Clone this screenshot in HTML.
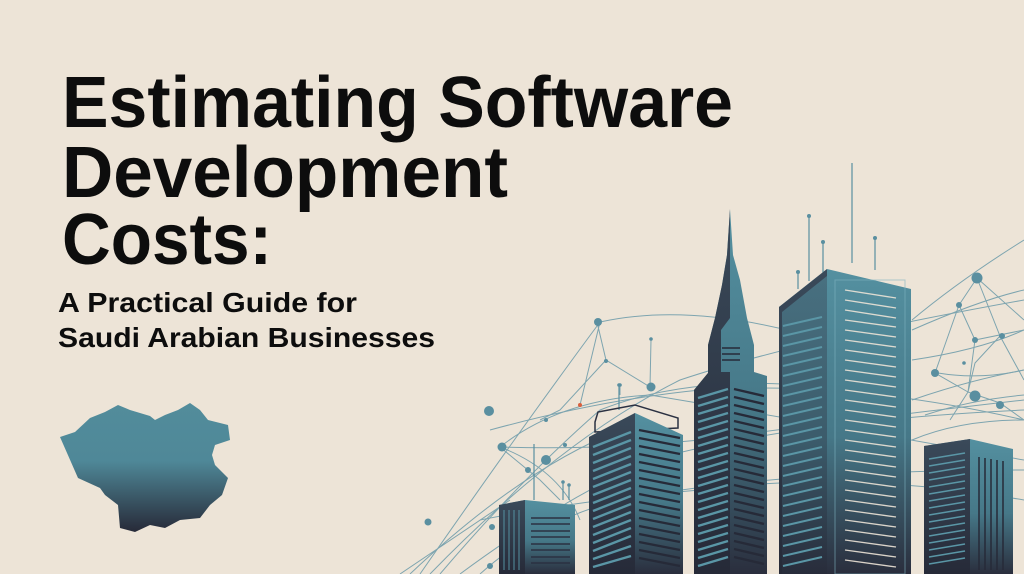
<!DOCTYPE html>
<html><head><meta charset="utf-8"><style>
html,body{margin:0;padding:0;background:#ede4d7;}
svg{display:block}
</style></head><body>
<svg width="1024" height="574" viewBox="0 0 1024 574" xmlns="http://www.w3.org/2000/svg">
<defs>
<linearGradient id="g" x1="0" y1="0" x2="0" y2="1"><stop offset="0" stop-color="#5490a0"/><stop offset="0.55" stop-color="#467888"/><stop offset="1" stop-color="#2a2e3d"/></linearGradient>
<linearGradient id="gd" x1="0" y1="0" x2="0" y2="1"><stop offset="0" stop-color="#3a4a5a"/><stop offset="1" stop-color="#262a38"/></linearGradient>
<linearGradient id="gm" x1="0" y1="0" x2="0" y2="1"><stop offset="0" stop-color="#528c9b"/><stop offset="0.45" stop-color="#4f8898"/><stop offset="1" stop-color="#272a38"/></linearGradient>
</defs>
<rect width="1024" height="574" fill="#ede4d7"/>
<g font-family="Liberation Sans, sans-serif" font-weight="bold" fill="#0d0d0d">
<text x="62" y="127" font-size="72" textLength="671" lengthAdjust="spacingAndGlyphs">Estimating Software</text>
<text x="62" y="197" font-size="72" textLength="446" lengthAdjust="spacingAndGlyphs">Development</text>
<text x="62" y="264" font-size="72" textLength="210" lengthAdjust="spacingAndGlyphs">Costs:</text>
<text x="58" y="312" font-size="28" textLength="299" lengthAdjust="spacingAndGlyphs">A Practical Guide for</text>
<text x="58" y="347" font-size="28" textLength="377" lengthAdjust="spacingAndGlyphs">Saudi Arabian Businesses</text>
</g>
<path d="M60,437 L75,432 L90,418 L105,412 L118,405 L130,410 L150,416 L155,420 L165,415 L178,410 L190,403 L200,410 L208,420 L228,425 L230,440 L215,445 L212,455 L215,465 L228,478 L222,495 L210,505 L200,518 L180,520 L165,528 L150,525 L135,532 L120,528 L118,505 L105,495 L100,488 L78,478 Z" fill="url(#gm)"/>
<g stroke="#6a9aa9" stroke-width="1" fill="none" opacity="0.85">
<path d="M420,574 Q520,430 600,322 Q700,300 840,345"/>
<path d="M430,574 Q560,440 680,380 Q800,340 1024,300"/>
<path d="M440,574 Q520,480 600,410 Q700,370 850,390"/>
<path d="M460,574 Q560,500 650,460 Q800,420 1024,410"/>
<path d="M480,574 Q540,520 620,500 Q780,470 1024,470"/>
<path d="M490,430 Q600,400 700,390 Q850,380 1024,420"/>
<path d="M500,447 Q560,400 650,395 Q800,420 1024,460"/>
<path d="M500,447 Q600,450 700,440 Q850,420 1024,400"/>
<path d="M500,447 Q560,470 580,520 M500,447 L540,480 L560,500"/>
<path d="M480,520 Q580,500 700,490 Q850,470 1024,500"/>
<path d="M600,322 L580,405 M597,322 L606,360 L650,387 M606,360 L560,410 L540,420"/>
<path d="M650,387 L651,340 M620,395 L620,385"/>
<path d="M912,320 Q960,280 1024,240 M912,330 Q980,300 1024,290 M912,360 Q980,350 1024,330 M912,400 Q970,380 1024,370 M912,440 Q960,420 1024,420"/>
<path d="M977,278 L959,305 L975,340 L968,392 L1000,403 L1024,420 M977,278 L1000,336 L1024,380 M959,305 L935,373 L968,392 M977,278 L1024,320 M975,340 L1024,330 M968,392 L975,363 L1000,336 M968,392 L950,420"/>
<path d="M938,373 Q980,380 1024,370 M925,415 Q970,400 1024,395"/>
<path d="M400,574 Q480,520 510,500 M410,574 Q520,470 620,430"/>
</g>
<g fill="#5a8fa0">
<circle cx="598" cy="322" r="4"/><circle cx="606" cy="361" r="2"/><circle cx="651" cy="387" r="4.5"/><circle cx="546" cy="420" r="2"/><circle cx="489" cy="411" r="5"/><circle cx="502" cy="447" r="4.5"/><circle cx="565" cy="445" r="2"/><circle cx="546" cy="460" r="5"/><circle cx="528" cy="470" r="3"/><circle cx="977" cy="278" r="5.5"/><circle cx="959" cy="305" r="3"/><circle cx="975" cy="340" r="3"/><circle cx="1002" cy="336" r="3"/><circle cx="935" cy="373" r="4"/><circle cx="975" cy="396" r="5.5"/><circle cx="1000" cy="405" r="4"/><circle cx="492" cy="527" r="3"/><circle cx="428" cy="522" r="3.5"/><circle cx="490" cy="566" r="3"/>
<circle cx="651" cy="339" r="1.8"/><circle cx="620" cy="385" r="1.8"/><circle cx="964" cy="363" r="1.8"/>
</g>
<circle cx="580" cy="405" r="2" fill="#d9603e"/>
<g stroke="#5a8fa0" stroke-width="1.2">
<line x1="534" y1="500" x2="534" y2="444"/><line x1="563" y1="500" x2="563" y2="482"/><line x1="569" y1="500" x2="569" y2="485"/>
<line x1="619" y1="410" x2="619" y2="385"/>
<line x1="798" y1="289" x2="798" y2="272"/><line x1="809" y1="281" x2="809" y2="216"/><line x1="823" y1="274" x2="823" y2="242"/><line x1="852" y1="263" x2="852" y2="163"/><line x1="875" y1="270" x2="875" y2="238"/>
</g>
<g fill="#5a8fa0"><circle cx="809" cy="216" r="2"/><circle cx="823" cy="242" r="2"/><circle cx="798" cy="272" r="2"/><circle cx="875" cy="238" r="2"/><circle cx="563" cy="482" r="1.8"/><circle cx="569" cy="485" r="1.8"/><circle cx="619" cy="385" r="1.8"/></g>
<!-- B1 -->
<polygon points="499,505 525,500 575,505 575,574 499,574" fill="url(#g)"/>
<polygon points="499,505 525,500 525,574 499,574" fill="url(#gd)"/>
<g stroke="#5490a0" stroke-width="1"><line x1="504" y1="510" x2="504" y2="570"/><line x1="509" y1="510" x2="509" y2="570"/><line x1="514" y1="510" x2="514" y2="570"/><line x1="519" y1="510" x2="519" y2="570"/></g>
<g stroke="#2b3142" stroke-width="1.5"><path d="M531,518H570M531,524H570M531,531H570M531,537H570M531,544H570M531,550H570M531,557H570M531,563H570"/></g>
<!-- B2 -->
<polygon points="595,422 598,412 635,405 678,418 678,428 595,432" fill="none" stroke="#2b3142" stroke-width="1.5"/>
<polygon points="589,437 635,413 683,435 683,574 589,574" fill="url(#g)"/>
<polygon points="589,437 635,413 635,574 589,574" fill="url(#gd)"/>
<g stroke="#5a96a6" stroke-width="2.4"><path d="M593,447L631,432M593,455L631,440M593,463L631,448M593,471L631,456M593,479L631,464M593,487L631,472M593,495L631,480M593,503L631,488M593,511L631,496M593,519L631,504M593,527L631,512M593,535L631,520M593,543L631,528M593,551L631,536M593,559L631,546M593,567L631,556"/></g>
<g stroke="#262a38" stroke-width="2.4"><path d="M639,430L680,438M639,438L680,446M639,446L680,454M639,454L680,462M639,462L680,470M639,470L680,478M639,478L680,486M639,486L680,494M639,494L680,502M639,502L680,510M639,510L680,518M639,518L680,526M639,526L680,534M639,534L680,542M639,542L680,550M639,550L680,558M639,558L680,566"/></g>
<!-- B3 -->
<polygon points="730,209 733,255 740,280 747,318 754,345 754,372 767,376 767,574 694,574 694,390 708,373 708,345 715,318 722,285 727,255" fill="url(#g)"/>
<polygon points="730,209 727,255 722,285 715,318 708,345 708,373 694,390 694,574 730,574 730,372 721,372 721,330 730,318" fill="url(#gd)"/>
<g stroke="#262a38" stroke-width="1.6"><path d="M722,348H740M722,354H740M722,360H740"/></g>
<g stroke="#5a96a6" stroke-width="2.4"><path d="M698,398L728,389M698,406L728,397M698,414L728,405M698,422L728,413M698,430L728,421M698,438L728,429M698,446L728,437M698,454L728,445M698,462L728,453M698,470L728,461M698,478L728,469M698,486L728,477M698,494L728,485M698,502L728,493M698,510L728,501M698,518L728,509M698,526L728,517M698,534L728,525M698,542L728,533M698,550L728,541M698,558L728,549M698,566L728,557"/></g>
<g stroke="#262a38" stroke-width="2.4"><path d="M734,389L764,396M734,397L764,404M734,405L764,412M734,413L764,420M734,421L764,428M734,429L764,436M734,437L764,444M734,445L764,452M734,453L764,460M734,461L764,468M734,469L764,476M734,477L764,484M734,485L764,492M734,493L764,500M734,501L764,508M734,509L764,516M734,517L764,524M734,525L764,532M734,533L764,540M734,541L764,548M734,549L764,556M734,557L764,564"/></g>
<!-- B4 -->
<polygon points="779,307 827,269 911,289 911,574 779,574" fill="url(#g)"/>
<polygon points="779,307 827,269 827,574 779,574" fill="url(#gd)"/>
<polygon points="782,312 827,276 827,574 782,574" fill="url(#g)" opacity="0.55"/>
<rect x="835" y="280" width="70" height="294" fill="none" stroke="#7fb3c0" stroke-width="1" opacity="0.6"/>
<g stroke="#ede4d7" stroke-width="1.3" opacity="0.9"><path d="M845,290L896,298M845,300L896,308M845,310L896,318M845,320L896,327M845,330L896,337M845,340L896,347M845,350L896,357M845,360L896,367M845,370L896,377M845,380L896,387M845,390L896,397M845,400L896,407M845,410L896,417M845,420L896,427M845,430L896,437M845,440L896,447M845,450L896,457M845,460L896,467M845,470L896,477M845,480L896,487M845,490L896,497M845,500L896,507M845,510L896,517M845,520L896,527M845,530L896,537M845,540L896,547M845,550L896,557M845,560L896,567"/></g>
<g stroke="#5a96a6" stroke-width="2"><path d="M783,326L822,317M783,336L822,327M783,346L822,337M783,356L822,347M783,366L822,357M783,376L822,367M783,386L822,377M783,396L822,387M783,406L822,397M783,416L822,407M783,426L822,417M783,436L822,427M783,446L822,437M783,456L822,447M783,466L822,457M783,476L822,467M783,486L822,477M783,496L822,487M783,506L822,497M783,516L822,507M783,526L822,517M783,536L822,527M783,546L822,537M783,556L822,547M783,566L822,557"/></g>
<!-- B5 -->
<polygon points="924,446 970,439 1013,449 1013,574 924,574" fill="url(#g)"/>
<polygon points="924,446 970,439 970,574 924,574" fill="url(#gd)"/>
<g stroke="#5a96a6" stroke-width="1.6"><path d="M929,459L965,453M929,466L965,460M929,473L965,467M929,480L965,474M929,487L965,481M929,494L965,488M929,501L965,495M929,508L965,502M929,515L965,509M929,522L965,516M929,529L965,523M929,536L965,530M929,543L965,537M929,550L965,544M929,557L965,551M929,564L965,558"/></g>
<g stroke="#262a38" stroke-width="1.5"><path d="M979,457V570M985,458V570M991,459V570M997,460V570M1003,461V570"/></g>
</svg>
</body></html>
